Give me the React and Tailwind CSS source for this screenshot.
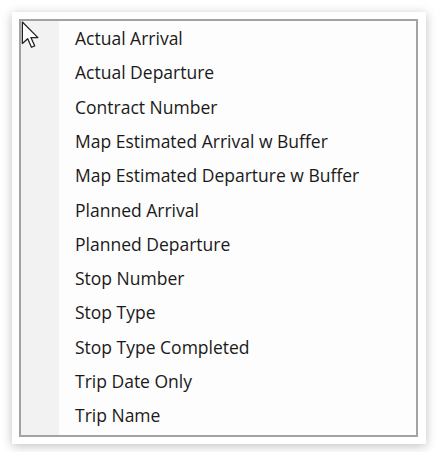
const items = [
  'Actual Arrival',
  'Actual Departure',
  'Contract Number',
  'Map Estimated Arrival w Buffer',
  'Map Estimated Departure w Buffer',
  'Planned Arrival',
  'Planned Departure',
  'Stop Number',
  'Stop Type',
  'Stop Type Completed',
  'Trip Date Only',
  'Trip Name',
]

function Cursor() {
  return (
    <svg width="22" height="30" viewBox="0 0 20 28" className="absolute left-[0px] top-[0px]">
      <path
        d="M1 1 L1 21 L6 16.5 L9.5 24.5 L12.5 23.2 L9 15.5 L15.5 15.5 Z"
        fill="#ffffff"
        stroke="#222"
        strokeWidth="1.2"
        strokeLinejoin="round"
      />
    </svg>
  )
}

export default function App() {
  return (
    <div className="w-[437px] h-[452px] bg-white p-[12px]">
      <div className="w-[414px] h-[432px] bg-white shadow-[0_2px_10px_rgba(0,0,0,0.25)] pt-[7px] pl-[7px]">
        <div className="relative w-[399px] h-[418px] border-2 border-[#a3a3a3] bg-[#fdfdfd] flex">
          <div className="w-[38px] h-full bg-[#f2f2f2]" />
          <ul
            className="flex-1 pl-[16px]"
            style={{ fontFamily: '"Open Sans", "Noto Sans", sans-serif' }}
          >
            {items.map((t) => (
              <li
                key={t}
                className="h-[34.3px] flex items-center text-[17.5px] font-medium text-[#1a1a1a]"
              >
                {t}
              </li>
            ))}
          </ul>
          <Cursor />
        </div>
      </div>
    </div>
  )
}
